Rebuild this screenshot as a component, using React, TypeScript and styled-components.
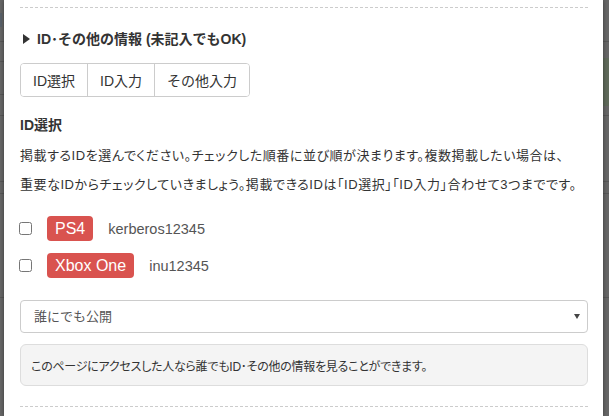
import React from 'react';
import styled, { createGlobalStyle } from 'styled-components';

const GlobalStyle = createGlobalStyle`
  html, body {
    margin: 0;
    padding: 0;
    background: #646464;
  }
  * {
    box-sizing: border-box;
  }
`;

// the page behind the dialog only shows through at the thin strips on each side
const Backdrop = styled.div`
  height: 416px;
  overflow: hidden;
  display: flex;
  padding-left: 4px;
  background:
    linear-gradient(#59606a, #59606a) 0 13px / 2px 14px no-repeat,
    linear-gradient(#5f6a5a, #5f6a5a) right 0 top 58px / 6px 48px no-repeat,
    linear-gradient(#575757, #575757) 0 41px / 100% 1px no-repeat,
    linear-gradient(#575757, #575757) 0 61px / 100% 1px no-repeat,
    linear-gradient(#575757, #575757) 0 94px / 100% 1px no-repeat,
    linear-gradient(#575757, #575757) 0 115px / 100% 1px no-repeat,
    linear-gradient(#575757, #575757) 0 181px / 100% 1px no-repeat,
    linear-gradient(#575757, #575757) 0 193px / 100% 1px no-repeat,
    linear-gradient(#575757, #575757) 0 297px / 100% 1px no-repeat,
    #666666;
`;

const Modal = styled.div`
  width: 599px;
  flex: none;
  background: #fff;
  padding: 7px 15px 0 16px;
  box-shadow: 0 0 4px rgba(0, 0, 0, 0.45);
  font-family: "Liberation Sans", "Noto Sans CJK JP", sans-serif;
  color: #333;
`;

const Divider = styled.hr`
  margin: 0;
  border: none;
  border-top: 1px dashed #ccc;
`;

const SectionHeading = styled.h3`
  margin: 21px 0 0;
  display: flex;
  align-items: center;
  gap: 7px;
  font-size: 14px;
  line-height: 20px;
  font-weight: bold;
  color: #333;
`;

const Caret = styled.span`
  width: 0;
  height: 0;
  margin-left: 3px;
  border-left: 7px solid #333;
  border-top: 5px solid transparent;
  border-bottom: 5px solid transparent;
`;

const ButtonGroup = styled.div`
  display: inline-flex;
  margin-top: 14px;
  border: 1px solid #ccc;
  border-radius: 4px;
  overflow: hidden;
`;

const GroupButton = styled.button`
  height: 32px;
  padding: 0 12px;
  border: none;
  border-left: 1px solid #ccc;
  background: #fff;
  font-family: inherit;
  font-size: 14px;
  color: #333;
  &:first-child {
    border-left: none;
  }
`;

const SubHeading = styled.h4`
  margin: 18px 0 0;
  font-size: 14px;
  line-height: 20px;
  font-weight: bold;
`;

const Description = styled.p`
  margin: 6px 0 0;
  font-size: 13px;
  line-height: 29px;
  letter-spacing: 0.55px;
  font-feature-settings: "palt";
`;

const IdList = styled.div`
  display: flex;
  flex-direction: column;
  gap: 12px;
  margin-top: 17px;
`;

const IdRow = styled.label`
  display: flex;
  align-items: center;
  height: 25px;
`;

const Check = styled.input`
  width: 13px;
  height: 13px;
  margin: 0 15px 0 -1px;
`;

const PlatformBadge = styled.span`
  height: 25px;
  display: inline-flex;
  align-items: center;
  padding: 0 8px;
  border-radius: 4px;
  background: #d9534f;
  color: #fff;
  font-size: 16px;
`;

const UserName = styled.span`
  margin-left: 15px;
  font-size: 14.5px;
  color: #555;
`;

const SelectWrap = styled.div`
  position: relative;
  margin-top: 22px;
`;

const Select = styled.select`
  width: 100%;
  height: 33px;
  padding: 0 13px;
  border: 1px solid #ccc;
  border-radius: 4px;
  background: #fff;
  appearance: none;
  font-family: inherit;
  font-size: 13px;
  color: #555;
`;

const SelectArrow = styled.span`
  position: absolute;
  right: 8px;
  top: 14px;
  width: 0;
  height: 0;
  border-top: 5px solid #444;
  border-left: 3px solid transparent;
  border-right: 3px solid transparent;
  pointer-events: none;
`;

const Notice = styled.div`
  margin-top: 11px;
  height: 42px;
  display: flex;
  align-items: center;
  padding: 0 10px;
  border: 1px solid #ddd;
  border-radius: 6px;
  background: #f4f4f4;
  font-size: 12px;
  letter-spacing: -0.25px;
  font-feature-settings: "palt";
`;

const BottomDivider = styled(Divider)`
  margin-top: 20px;
`;

const ids = [
  { platform: 'PS4', name: 'kerberos12345' },
  { platform: 'Xbox One', name: 'inu12345' },
];

const App: React.FC = () => {
  return (
    <>
      <GlobalStyle />
      <Backdrop>
        <Modal>
          <Divider />
          <SectionHeading>
            <Caret />
            ID･その他の情報 (未記入でもOK)
          </SectionHeading>
          <ButtonGroup>
            <GroupButton>ID選択</GroupButton>
            <GroupButton>ID入力</GroupButton>
            <GroupButton>その他入力</GroupButton>
          </ButtonGroup>
          <SubHeading>ID選択</SubHeading>
          <Description>
            掲載するIDを選んでください。チェックした順番に並び順が決まります。複数掲載したい場合は、
            <br />
            重要なIDからチェックしていきましょう。掲載できるIDは「ID選択」「ID入力」合わせて3つまでです。
          </Description>
          <IdList>
            {ids.map((item) => (
              <IdRow key={item.name}>
                <Check type="checkbox" />
                <PlatformBadge>{item.platform}</PlatformBadge>
                <UserName>{item.name}</UserName>
              </IdRow>
            ))}
          </IdList>
          <SelectWrap>
            <Select defaultValue="public">
              <option value="public">誰にでも公開</option>
              <option value="friends">フレンドのみ公開</option>
              <option value="private">非公開</option>
            </Select>
            <SelectArrow />
          </SelectWrap>
          <Notice>このページにアクセスした人なら誰でもID･その他の情報を見ることができます。</Notice>
          <BottomDivider />
        </Modal>
      </Backdrop>
    </>
  );
};

export default App;
